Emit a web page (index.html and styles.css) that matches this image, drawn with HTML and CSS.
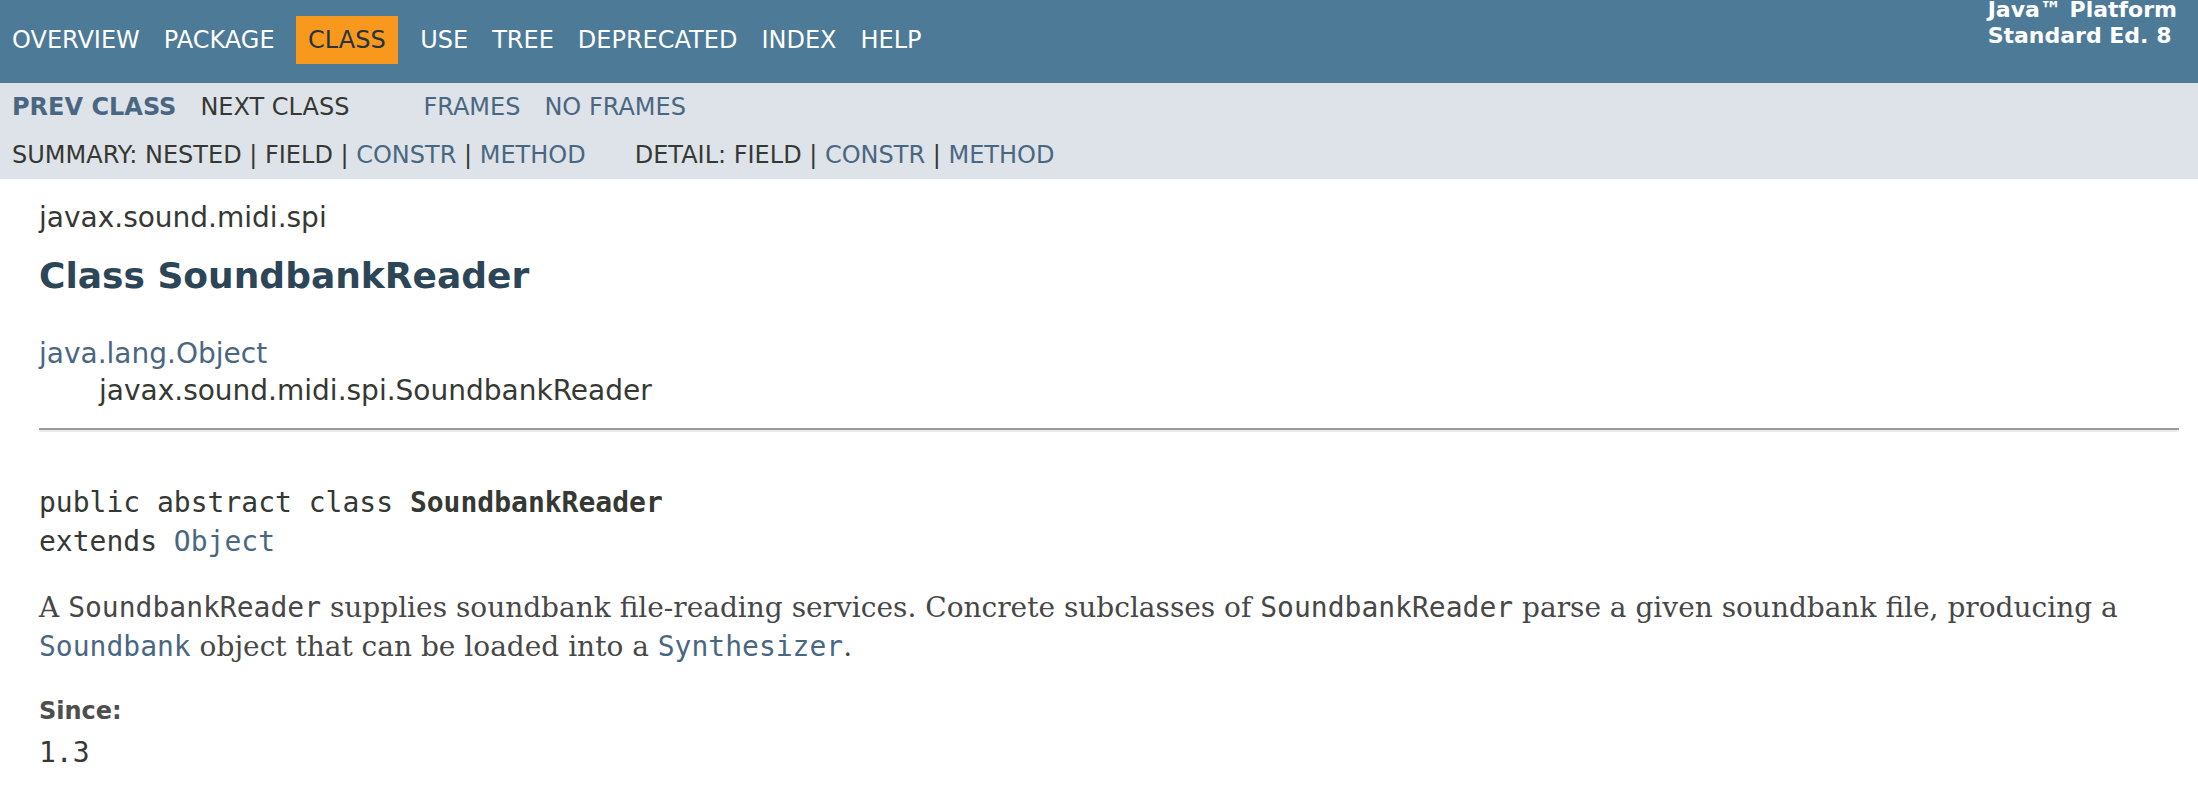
FILE: index.html
```html
<!DOCTYPE html>
<html lang="en">
<head>
<meta charset="utf-8">
<title>SoundbankReader (Java Platform SE 8)</title>
<link rel="stylesheet" href="styles.css">
</head>
<body>
<div class="top-nav">
  <ul class="nav-list">
    <li><a href="#">OVERVIEW</a></li>
    <li><a href="#">PACKAGE</a></li>
    <li class="nav-active">CLASS</li>
    <li><a href="#">USE</a></li>
    <li><a href="#">TREE</a></li>
    <li><a href="#">DEPRECATED</a></li>
    <li><a href="#">INDEX</a></li>
    <li><a href="#">HELP</a></li>
  </ul>
  <div class="about-language"><strong>Java&trade;&nbsp;Platform<br>Standard&nbsp;Ed.&nbsp;8</strong></div>
</div>
<div class="sub-nav">
  <div class="sub-row">
    <ul class="nav-list prev-next">
      <li><a href="#" class="type-link">PREV CLASS</a></li>
      <li>NEXT CLASS</li>
    </ul>
    <ul class="nav-list">
      <li><a href="#">FRAMES</a></li>
      <li><a href="#">NO FRAMES</a></li>
    </ul>
  </div>
  <div class="sub-row sub-row-links">
    <ul class="sub-nav-list summary">
      <li>SUMMARY:&nbsp;</li>
      <li>NESTED&nbsp;|&nbsp;</li>
      <li>FIELD&nbsp;|&nbsp;</li>
      <li><a href="#">CONSTR</a>&nbsp;|&nbsp;</li>
      <li><a href="#">METHOD</a></li>
    </ul>
    <ul class="sub-nav-list">
      <li>DETAIL:&nbsp;</li>
      <li>FIELD&nbsp;|&nbsp;</li>
      <li><a href="#">CONSTR</a>&nbsp;|&nbsp;</li>
      <li><a href="#">METHOD</a></li>
    </ul>
  </div>
</div>
<div class="header">
  <div class="sub-title">javax.sound.midi.spi</div>
  <h2 class="title">Class SoundbankReader</h2>
</div>
<div class="content">
  <ul class="inheritance">
    <li><a href="#">java.lang.Object</a></li>
    <li>
      <ul class="inheritance nested">
        <li>javax.sound.midi.spi.SoundbankReader</li>
      </ul>
    </li>
  </ul>
  <div class="description">
    <hr class="rule">
<pre class="signature">public abstract class <span class="type-name">SoundbankReader</span>
extends <a href="#">Object</a></pre>
    <div class="block">A <code>SoundbankReader</code> supplies soundbank file-reading services. Concrete subclasses of <code>SoundbankReader</code> parse a given soundbank file, producing a <a href="#"><code>Soundbank</code></a> object that can be loaded into a <a href="#"><code>Synthesizer</code></a>.</div>
    <dl class="tags">
      <dt>Since:</dt>
      <dd>1.3</dd>
    </dl>
  </div>
</div>
</body>
</html>
```

FILE: styles.css
```css
html, body {
  margin: 0;
  padding: 0;
  background: #ffffff;
}

body {
  font-family: "DejaVu Sans", "Liberation Sans", Arial, sans-serif;
  font-size: 28px;
  color: #353833;
}

a {
  color: #4A6782;
  text-decoration: none;
}

/* ---------- top navigation ---------- */
.top-nav {
  display: flex;
  align-items: flex-start;
  background-color: #4D7A97;
  color: #ffffff;
  height: 67px;
  padding-top: 16px;
}

.nav-list {
  display: flex;
  list-style: none;
  margin: 0;
  padding: 0;
  font-size: 24px;
}

.nav-list li {
  padding: 10px 12px;
}

.top-nav .nav-list a {
  color: #ffffff;
}

.top-nav .nav-list li.nav-active {
  background-color: #F8981D;
  color: #253441;
  margin: 0 10px 0 9px;
  padding: 10px 12.5px;
}

.about-language {
  margin-left: auto;
  margin-top: -19px;
  padding: 0 21px;
  font-size: 22px;
  line-height: 26px;
  color: #ffffff;
}

/* ---------- sub navigation ---------- */
.sub-nav {
  background-color: #dee3e9;
  font-size: 24px;
}

.sub-row {
  display: flex;
}

.prev-next {
  margin-right: 50px;
}

.type-link {
  font-weight: bold;
}

.sub-row-links {
  padding: 10px 0 10px 12px;
}

.sub-nav-list {
  display: flex;
  list-style: none;
  margin: 0;
  padding: 0;
  white-space: pre;
}

.sub-nav-list.summary {
  margin-right: 49px;
}

/* ---------- header ---------- */
.header {
  margin: 0 39px;
  padding-top: 10px;
}

.sub-title {
  margin-top: 12px;
  font-size: 28px;
}

.title {
  margin: 21px 0;
  font-size: 36px;
  font-weight: bold;
  color: #2c4557;
}

/* ---------- content ---------- */
.content {
  padding: 20px 19px 20px 39px;
}

.inheritance {
  list-style: none;
  margin: 0;
  padding: 0;
}

.inheritance.nested {
  margin-left: 30px;
  padding-left: 30px;
  padding-top: 4px;
}

.rule {
  height: 0;
  margin: 21px 0 0;
  border: 0;
  border-top: 2px solid #9a9a9a;
  border-bottom: 2px solid #ececec;
}

.signature {
  margin: 51px 0 0;
  font-family: "DejaVu Sans Mono", "Liberation Mono", monospace;
  font-size: 28px;
  line-height: 39px;
  color: #353833;
}

.type-name {
  font-weight: bold;
}

.block {
  margin: 27px 20px 0 0;
  font-family: "DejaVu Serif", "Liberation Serif", Georgia, serif;
  font-size: 28px;
  line-height: 39px;
  color: #474747;
}

.block code {
  font-family: "DejaVu Sans Mono", "Liberation Mono", monospace;
  font-size: 28px;
}

.tags {
  margin: 26px 0 0;
}

.tags dt {
  font-size: 24px;
  font-weight: bold;
  line-height: 38px;
  color: #4E4E4E;
}

.tags dd {
  margin: 4px 0 0;
  font-family: "DejaVu Sans Mono", "Liberation Mono", monospace;
  font-size: 28px;
  line-height: 38px;
}
```
